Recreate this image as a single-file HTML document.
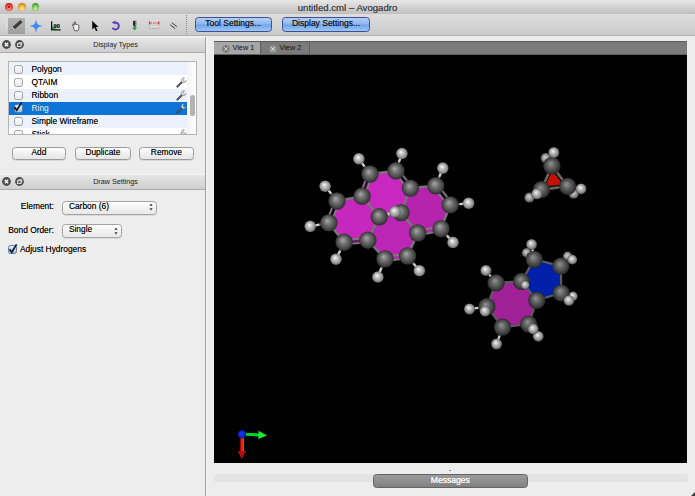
<!DOCTYPE html>
<html><head><meta charset="utf-8">
<style>
html,body{margin:0;padding:0;}
body{width:695px;height:496px;overflow:hidden;position:relative;background:#ededed;font-family:"Liberation Sans",sans-serif;font-size:8.4px;color:#000;text-shadow:0 0 0.3px rgba(0,0,0,0.55);}
.abs{position:absolute;}
#titlebar{left:0;top:0;width:695px;height:14.3px;background:linear-gradient(#e7e7e7,#d5d5d5 45%,#bfbfbf);}
#title{left:0px;width:695px;top:1.8px;text-align:center;font-size:9.6px;color:#404040;line-height:12px;}
.tl{width:7.8px;height:7.8px;border-radius:50%;top:3.2px;box-sizing:border-box;}
#toolbar{left:0;top:14.3px;width:695px;height:22.2px;background:linear-gradient(#dedede,#cacaca);box-sizing:border-box;border-bottom:1px solid #b2b2b2;}
.dockhead{left:0;width:205px;height:16.4px;background:linear-gradient(#e6e6e6,#cecece);border-bottom:1px solid #adadad;border-top:1px solid #f2f2f2;box-sizing:border-box;}
.docktitle{left:26px;width:179px;text-align:center;font-size:7.2px;line-height:14px;color:#1a1a1a;text-shadow:none;}
.dk{width:9px;height:9px;border-radius:50%;background:#4c4c4c;}
.btn{height:13.2px;border:1px solid #9c9c9c;border-radius:3.5px;background:linear-gradient(#ffffff,#f0f0f0 50%,#e6e6e6);box-sizing:border-box;text-align:center;line-height:9.6px;color:#000;box-shadow:0 0.5px 0.5px rgba(0,0,0,0.15);}
.bluebtn{height:14.3px;top:17.4px;border:1px solid #3d4f96;border-radius:3.5px;background:linear-gradient(#b4cff5,#8db5ee 48%,#6fa3e9 52%,#9cc6f7);box-sizing:border-box;text-align:center;font-size:8.5px;line-height:11.5px;color:#111;}
#list{left:8px;top:61.4px;width:189.2px;height:73.8px;background:#fff;border:1px solid #b4b4b4;box-sizing:border-box;overflow:hidden;}
.row{left:0;width:178px;height:13.1px;line-height:13px;}
.row span{position:absolute;left:22.5px;top:0.5px;}
.cb{position:absolute;left:4.5px;top:2.3px;width:9px;height:9px;border:1px solid #a2a2a2;border-radius:2.5px;background:linear-gradient(#fdfdfd,#e9e9e9);box-sizing:border-box;}
.cbx{background:linear-gradient(#dcebfb,#9cc4f0);border-color:#5e7aa8;}
.combo{height:14px;border:1px solid #a4a4a4;border-radius:3.5px;background:linear-gradient(#ffffff,#f2f2f2 50%,#e8e8e8);box-sizing:border-box;line-height:9px;color:#000;padding-left:5.6px;box-shadow:0 0.5px 0.5px rgba(0,0,0,0.15);}
.lbl{text-align:right;width:53.9px;left:0;}
#tabbar{left:214px;top:40.6px;width:473px;height:14.4px;background:#7b7b7b;border-top:1px solid #5a5a5a;border-bottom:1px solid #5e5e5e;box-sizing:border-box;}
.tab{text-shadow:none;top:41.6px;height:12.6px;font-size:7.3px;line-height:12.4px;color:#111;box-sizing:border-box;}
#gl{left:214px;top:55px;width:473px;height:408px;background:#000;}
</style></head><body>
<div id="titlebar" class="abs"></div>
<div id="title" class="abs">untitled.cml – Avogadro</div>
<div class="abs tl" style="left:5.2px;background:radial-gradient(circle at 50% 70%,#ff9c8c,#ec4a40 45%,#b02420 80%,#6e1410);"></div>
<div class="abs" style="left:7.8px;top:5.9px;width:2.6px;height:2.6px;border-radius:50%;background:#8a0808;"></div>
<div class="abs tl" style="left:18.4px;background:radial-gradient(circle at 50% 72%,#ffec9c,#f0b23c 45%,#b87a20 80%,#6e4a10);"></div>
<div class="abs tl" style="left:31.5px;background:radial-gradient(circle at 50% 72%,#c8f4a8,#7ec656 45%,#46902c 80%,#285a18);"></div>
<div id="toolbar" class="abs"></div>
<!-- toolbar handle -->
<div class="abs" style="left:5.5px;top:19px;width:1.6px;height:10px;background:repeating-linear-gradient(#f4f4f4 0 1.4px,transparent 1.4px 2.6px);"></div>
<div class="abs" style="left:8.3px;top:17.5px;width:16.4px;height:16.2px;background:linear-gradient(#b2b2b2,#a0a0a0);"></div>
<!--ICONS-->
<svg class="abs" style="left:8px;top:17px" width="18" height="18" viewBox="0 0 18 18"><line x1="5.6" y1="11.2" x2="13.4" y2="4.2" stroke="#2e2e2e" stroke-width="3" stroke-linecap="butt"/><line x1="6.2" y1="10.2" x2="13.0" y2="4.0" stroke="#5a5a5a" stroke-width="0.8"/><polygon points="3.6,13 4.6,10.2 6.8,12.3" fill="#e8e0d0"/><polygon points="3.6,13 4.2,11.6 5.0,12.6" fill="#222"/></svg>
<svg class="abs" style="left:30.2px;top:19.6px" width="12" height="12" viewBox="0 0 12 12"><path d="M6 0.4 Q6.4 5.6 11.6 6 Q6.4 6.4 6 11.6 Q5.6 6.4 0.4 6 Q5.6 5.6 6 0.4 Z" fill="#2a80ff" stroke="#2a80ff" stroke-width="0.35" stroke-linejoin="round"/><circle cx="6" cy="6" r="1.1" fill="#5aa2ff"/></svg>
<svg class="abs" style="left:50px;top:20px" width="12" height="12" viewBox="0 0 12 12"><polygon points="2,9.5 2,5.5 6.5,9.5" fill="#35b035"/><path d="M1.6 1.2 V9.8 H10.6" stroke="#111" stroke-width="1.2" fill="none"/><text x="3.6" y="7.6" font-family="Liberation Sans" font-size="5.6" font-weight="bold" fill="#111">90</text></svg>
<svg class="abs" style="left:70px;top:20px" width="12" height="12" viewBox="0 0 12 12"><path d="M3.2 6.2 L2.2 4.6 Q2.6 3.8 3.4 4.4 L4.2 5.4 V2 Q4.8 1.2 5.4 2 V4.4 Q6 3.8 6.6 4.4 Q7.2 4 7.8 4.8 Q8.6 4.6 8.8 5.6 V8.4 Q8.6 10.4 7.8 10.8 H4.8 Q3.6 9 3.2 6.2 Z" fill="#f4f0e4" stroke="#3a3a3a" stroke-width="0.8"/></svg>
<svg class="abs" style="left:91px;top:20px" width="10" height="12" viewBox="0 0 10 12"><path d="M1.2 0.7 V9.6 L3.4 7.6 L5.0 11.2 L6.5 10.5 L4.9 7.0 L7.6 6.9 Z" fill="#0a0a0a"/></svg>
<svg class="abs" style="left:109px;top:19px" width="13" height="13" viewBox="0 0 13 13"><path d="M6.2 3.6 A3.4 3.4 0 1 1 3.4 8.6" stroke="#5b3fb5" stroke-width="1.9" fill="none"/><polygon points="2.6,3.6 6.6,1.6 6.4,5.6" fill="#5b3fb5"/><circle cx="6.3" cy="6.9" r="0.8" fill="#b8b0d8"/></svg>
<svg class="abs" style="left:130px;top:20px" width="10" height="12" viewBox="0 0 10 12"><rect x="3" y="0.8" width="3.4" height="5" fill="#2a2a2a"/><rect x="5.2" y="1.6" width="1.4" height="1.2" fill="#ddd"/><rect x="5.2" y="3.6" width="1.4" height="1.2" fill="#ddd"/><rect x="3.6" y="6" width="2.2" height="2" fill="#2f9e3f"/><polygon points="2.2,7.6 7.2,7.6 4.7,10.6" fill="#2f9e3f"/></svg>
<svg class="abs" style="left:148px;top:20px" width="13" height="12" viewBox="0 0 13 12"><rect x="1" y="5.8" width="10.4" height="3.2" fill="#dedede" stroke="#b4b4b4" stroke-width="0.4"/><path d="M2.5 7.4 V9 M4.5 7.8 V9 M6.5 7.4 V9 M8.5 7.8 V9 M10 7.4 V9" stroke="#777" stroke-width="0.5"/><path d="M1.4 3 H11" stroke="#e03030" stroke-width="0.8" stroke-dasharray="2.6 1"/><path d="M1.6 1.4 V4.6 M10.8 1.4 V4.6" stroke="#e02020" stroke-width="1.1"/></svg>
<svg class="abs" style="left:167px;top:20px" width="12" height="12" viewBox="0 0 12 12"><path d="M3.2 4.8 L8.2 8.6 M4.8 2.8 L9.8 6.6" stroke="#2a2a2a" stroke-width="0.9"/></svg>
<!--/ICONS-->
<div class="abs" style="left:186px;top:15px;width:0;height:19px;border-left:1px dotted #8a8a8a;"></div>
<div class="abs bluebtn" style="left:195px;width:76.5px;">Tool Settings...</div>
<div class="abs bluebtn" style="left:282px;width:88px;">Display Settings...</div>

<div class="abs dockhead" style="top:37px;"></div>
<div class="abs docktitle" style="top:38px;">Display Types</div>
<div class="abs dockhead" style="top:174px;"></div>
<div class="abs docktitle" style="top:175px;">Draw Settings</div>
<!--DOCKICONS-->
<svg class="abs" style="left:2px;top:40px" width="9" height="9" viewBox="0 0 9 9"><circle cx="4.5" cy="4.5" r="4.4" fill="#4a4a4a"/><path d="M2.8 2.8 L6.2 6.2 M6.2 2.8 L2.8 6.2" stroke="#f4f4f4" stroke-width="1.5"/></svg>
<svg class="abs" style="left:15.1px;top:40px" width="9" height="9" viewBox="0 0 9 9"><circle cx="4.5" cy="4.5" r="4.4" fill="#4a4a4a"/><rect x="2.4" y="3.8" width="3.6" height="2.6" fill="none" stroke="#f4f4f4" stroke-width="0.9"/><path d="M3.8 3.6 V2.6 H6.8 V5 H6.2" fill="none" stroke="#f4f4f4" stroke-width="0.8"/></svg>
<svg class="abs" style="left:2px;top:177px" width="9" height="9" viewBox="0 0 9 9"><circle cx="4.5" cy="4.5" r="4.4" fill="#4a4a4a"/><path d="M2.8 2.8 L6.2 6.2 M6.2 2.8 L2.8 6.2" stroke="#f4f4f4" stroke-width="1.5"/></svg>
<svg class="abs" style="left:15.1px;top:177px" width="9" height="9" viewBox="0 0 9 9"><circle cx="4.5" cy="4.5" r="4.4" fill="#4a4a4a"/><rect x="2.4" y="3.8" width="3.6" height="2.6" fill="none" stroke="#f4f4f4" stroke-width="0.9"/><path d="M3.8 3.6 V2.6 H6.8 V5 H6.2" fill="none" stroke="#f4f4f4" stroke-width="0.8"/></svg>
<!--/DOCKICONS-->
<div id="list" class="abs">
 <div class="abs row" style="top:0;background:#ecf2fd;"><i class="cb"></i><span>Polygon</span></div>
 <div class="abs row" style="top:13.1px;"><i class="cb"></i><span>QTAIM</span></div>
 <div class="abs row" style="top:26.2px;background:#ecf2fd;"><i class="cb"></i><span>Ribbon</span></div>
 <div class="abs row" style="top:39.3px;background:#0b74d6;color:#fff;"><i class="cb cbx"></i><span>Ring</span></div>
 <div class="abs row" style="top:52.4px;background:#ecf2fd;"><i class="cb"></i><span>Simple Wireframe</span></div>
 <div class="abs row" style="top:65.5px;"><i class="cb"></i><span>Stick</span></div>
 <div class="abs" style="left:178px;top:0;width:10px;height:73px;background:linear-gradient(90deg,#f4f4f4,#fdfdfd);"></div>
 <div class="abs" style="left:180.7px;top:32.6px;width:5px;height:20.7px;border-radius:2.5px;background:#b2b2b2;"></div>
</div>
<!--WRENCH-->
<svg class="abs" style="left:175.6px;top:77.2px" width="11" height="11" viewBox="0 0 11 11"><path d="M1.4 9.6 L6.2 4.8" stroke="#3c3c3c" stroke-width="2" stroke-linecap="round"/><path d="M1.6 9.2 L6.0 4.8" stroke="#8a8a8a" stroke-width="0.6"/><path d="M6.4 1.2 Q4.6 2.4 5.4 4.4 Q6.4 6.2 8.6 5.6 Q10 5 10.2 3.6 L8.4 4.4 L7.2 3.6 L7.0 2.2 L8.6 1.0 Q7.4 0.6 6.4 1.2 Z" fill="#e4e4e4" stroke="#6a6a6a" stroke-width="0.5"/></svg>
<svg class="abs" style="left:175.6px;top:90.3px" width="11" height="11" viewBox="0 0 11 11"><path d="M1.4 9.6 L6.2 4.8" stroke="#3c3c3c" stroke-width="2" stroke-linecap="round"/><path d="M1.6 9.2 L6.0 4.8" stroke="#8a8a8a" stroke-width="0.6"/><path d="M6.4 1.2 Q4.6 2.4 5.4 4.4 Q6.4 6.2 8.6 5.6 Q10 5 10.2 3.6 L8.4 4.4 L7.2 3.6 L7.0 2.2 L8.6 1.0 Q7.4 0.6 6.4 1.2 Z" fill="#e4e4e4" stroke="#6a6a6a" stroke-width="0.5"/></svg>
<svg class="abs" style="left:175.6px;top:103.4px" width="11" height="11" viewBox="0 0 11 11"><path d="M1.4 9.6 L6.2 4.8" stroke="#3c3c3c" stroke-width="2" stroke-linecap="round"/><path d="M1.6 9.2 L6.0 4.8" stroke="#8a8a8a" stroke-width="0.6"/><path d="M6.4 1.2 Q4.6 2.4 5.4 4.4 Q6.4 6.2 8.6 5.6 Q10 5 10.2 3.6 L8.4 4.4 L7.2 3.6 L7.0 2.2 L8.6 1.0 Q7.4 0.6 6.4 1.2 Z" fill="#e4e4e4" stroke="#6a6a6a" stroke-width="0.5"/></svg>
<div class="abs" style="left:175.6px;top:129.4px;width:11px;height:5px;overflow:hidden;"><svg style="position:absolute;left:0;top:0" width="11" height="11" viewBox="0 0 11 11"><path d="M1.4 9.6 L6.2 4.8" stroke="#3c3c3c" stroke-width="2" stroke-linecap="round"/><path d="M1.6 9.2 L6.0 4.8" stroke="#8a8a8a" stroke-width="0.6"/><path d="M6.4 1.2 Q4.6 2.4 5.4 4.4 Q6.4 6.2 8.6 5.6 Q10 5 10.2 3.6 L8.4 4.4 L7.2 3.6 L7.0 2.2 L8.6 1.0 Q7.4 0.6 6.4 1.2 Z" fill="#e4e4e4" stroke="#6a6a6a" stroke-width="0.5"/></svg></div>
<!--/WRENCH-->
<div class="abs btn" style="left:12px;top:147.3px;width:53.7px;">Add</div>
<div class="abs btn" style="left:75px;top:147.3px;width:55.7px;">Duplicate</div>
<div class="abs btn" style="left:139.2px;top:147.3px;width:54.5px;">Remove</div>
<div class="abs lbl" style="top:200.7px;">Element:</div>
<div class="abs combo" style="left:62.3px;top:200.7px;width:94.8px;">Carbon (6)</div>
<div class="abs lbl" style="top:224.5px;">Bond Order:</div>
<div class="abs combo" style="left:62.3px;top:224.2px;width:59.5px;">Single</div>
<div class="abs" style="left:20px;top:244px;">Adjust Hydrogens</div>
<div class="abs cb cbx" style="left:8.2px;top:245.2px;"></div>
<!--MISC-->
<svg class="abs" style="left:11.6px;top:101px" width="12" height="12" viewBox="0 0 12 12"><path d="M2.6 6.4 L4.8 9.2 L9.6 1.4" stroke="#151515" stroke-width="1.7" fill="none" stroke-linejoin="miter"/></svg>
<svg class="abs" style="left:7px;top:242.6px" width="12" height="12" viewBox="0 0 12 12"><path d="M2.6 6.4 L4.8 9.2 L9.6 1.4" stroke="#151515" stroke-width="1.7" fill="none" stroke-linejoin="miter"/></svg>
<svg class="abs" style="left:148.4px;top:202.4px" width="6" height="10" viewBox="0 0 6 10"><polygon points="3,1.6 4.6,3.8 1.4,3.8" fill="#3a3a3a"/><polygon points="1.4,6.3 4.6,6.3 3,8.5" fill="#3a3a3a"/></svg>
<svg class="abs" style="left:112.7px;top:225.9px" width="6" height="10" viewBox="0 0 6 10"><polygon points="3,1.6 4.6,3.8 1.4,3.8" fill="#3a3a3a"/><polygon points="1.4,6.3 4.6,6.3 3,8.5" fill="#3a3a3a"/></svg>
<!--/MISC-->
<div class="abs" style="left:205px;top:37px;width:1px;height:459px;background:#a2a2a2;"></div>
<div class="abs" style="left:206px;top:37px;width:1.6px;height:459px;background:#f1f1f1;"></div>
<div id="tabbar" class="abs"></div>
<div class="abs tab" style="left:214px;width:47px;background:#a6a6a6;border-right:1px solid #5c5c5c;padding-left:18.5px;">View 1</div>
<div class="abs tab" style="left:261px;width:49px;background:#7b7b7b;border-right:1px solid #5c5c5c;padding-left:18.5px;">View 2</div>
<!--TABICONS-->
<svg class="abs" style="left:221.5px;top:44.5px" width="8" height="8" viewBox="0 0 8 8"><circle cx="4" cy="4" r="3.7" fill="#7c7c7c"/><path d="M2.2 2.2 L5.8 5.8 M5.8 2.2 L2.2 5.8" stroke="#f0f0f0" stroke-width="0.7"/></svg>
<svg class="abs" style="left:269.2px;top:44.5px" width="8" height="8" viewBox="0 0 8 8"><circle cx="4" cy="4" r="3.7" fill="#959595"/><path d="M2.2 2.2 L5.8 5.8 M5.8 2.2 L2.2 5.8" stroke="#f0f0f0" stroke-width="0.7"/></svg>
<!--/TABICONS-->
<div id="gl" class="abs"></div>
<!--MOL--><svg class="abs" style="left:0;top:0" width="695" height="496" viewBox="0 0 695 496">
<defs>
<radialGradient id="gc" cx="0.5" cy="0.5" r="0.53" fx="0.41" fy="0.36">
<stop offset="0" stop-color="#aaaaaa"/><stop offset="0.16" stop-color="#929292"/><stop offset="0.42" stop-color="#6e6e6e"/><stop offset="0.72" stop-color="#4c4c4c"/><stop offset="0.92" stop-color="#303030"/><stop offset="1" stop-color="#141414"/></radialGradient>
<radialGradient id="gh" cx="0.5" cy="0.5" r="0.53" fx="0.41" fy="0.36">
<stop offset="0" stop-color="#fafafa"/><stop offset="0.16" stop-color="#e4e4e4"/><stop offset="0.42" stop-color="#bcbcbc"/><stop offset="0.72" stop-color="#969696"/><stop offset="0.92" stop-color="#6c6c6c"/><stop offset="1" stop-color="#3a3a3a"/></radialGradient>
<radialGradient id="ghd" cx="0.5" cy="0.5" r="0.52" fx="0.42" fy="0.38">
<stop offset="0" stop-color="#d0d0d0"/><stop offset="0.5" stop-color="#a0a0a0"/><stop offset="1" stop-color="#484848"/></radialGradient>
<radialGradient id="ghm" cx="0.5" cy="0.5" r="0.53" fx="0.41" fy="0.36">
<stop offset="0" stop-color="#f6f6f6"/><stop offset="0.18" stop-color="#dcdcdc"/><stop offset="0.45" stop-color="#b2b2b2"/><stop offset="0.75" stop-color="#888888"/><stop offset="1" stop-color="#3c3c3c"/></radialGradient>
<radialGradient id="gcd" cx="0.5" cy="0.5" r="0.53" fx="0.42" fy="0.37">
<stop offset="0" stop-color="#949494"/><stop offset="0.18" stop-color="#7e7e7e"/><stop offset="0.45" stop-color="#5e5e5e"/><stop offset="0.75" stop-color="#404040"/><stop offset="0.93" stop-color="#282828"/><stop offset="1" stop-color="#101010"/></radialGradient>
<radialGradient id="gb" cx="0.45" cy="0.42" r="0.6">
<stop offset="0" stop-color="#1a3cff"/><stop offset="1" stop-color="#0018a0"/></radialGradient>
<clipPath id="glclip"><rect x="214" y="55" width="473" height="408"/></clipPath>
</defs>
<g clip-path="url(#glclip)">
<polygon points="370.0,174.0 396.0,170.8 410.4,188.1 401.1,212.6 379.2,216.8 362.0,196.2" fill="#c828c0"/>
<polygon points="362.0,196.2 337.0,201.0 328.8,222.9 344.1,242.2 367.8,240.2 379.2,216.8" fill="#c628be"/>
<polygon points="410.4,188.1 435.8,185.8 450.2,204.9 441.0,228.7 417.7,233.0 401.1,212.6" fill="#b624ae"/>
<polygon points="379.2,216.8 401.1,212.6 417.7,233.0 407.6,256.0 385.0,258.9 367.8,240.2" fill="#bc26b4"/>
<line x1="370.0" y1="174.0" x2="364.4" y2="166.4" stroke="#717171" stroke-width="2.4"/>
<line x1="364.4" y1="166.4" x2="358.9" y2="158.8" stroke="#d0d0d0" stroke-width="2.4"/>
<line x1="396.0" y1="170.8" x2="398.9" y2="162.2" stroke="#717171" stroke-width="2.4"/>
<line x1="398.9" y1="162.2" x2="401.9" y2="153.5" stroke="#d0d0d0" stroke-width="2.4"/>
<line x1="435.8" y1="185.8" x2="439.3" y2="176.9" stroke="#717171" stroke-width="2.4"/>
<line x1="439.3" y1="176.9" x2="442.8" y2="168.1" stroke="#d0d0d0" stroke-width="2.4"/>
<line x1="450.2" y1="204.9" x2="459.4" y2="204.1" stroke="#717171" stroke-width="2.4"/>
<line x1="459.4" y1="204.1" x2="468.6" y2="203.2" stroke="#d0d0d0" stroke-width="2.4"/>
<line x1="441.0" y1="228.7" x2="447.0" y2="235.6" stroke="#717171" stroke-width="2.4"/>
<line x1="447.0" y1="235.6" x2="453.0" y2="242.4" stroke="#d0d0d0" stroke-width="2.4"/>
<line x1="337.0" y1="201.0" x2="331.1" y2="193.6" stroke="#717171" stroke-width="2.4"/>
<line x1="331.1" y1="193.6" x2="325.1" y2="186.2" stroke="#d0d0d0" stroke-width="2.4"/>
<line x1="328.8" y1="222.9" x2="319.5" y2="224.6" stroke="#717171" stroke-width="2.4"/>
<line x1="319.5" y1="224.6" x2="310.2" y2="226.3" stroke="#d0d0d0" stroke-width="2.4"/>
<line x1="344.1" y1="242.2" x2="340.1" y2="250.7" stroke="#717171" stroke-width="2.4"/>
<line x1="340.1" y1="250.7" x2="336.0" y2="259.2" stroke="#d0d0d0" stroke-width="2.4"/>
<line x1="385.0" y1="258.9" x2="381.4" y2="267.9" stroke="#717171" stroke-width="2.4"/>
<line x1="381.4" y1="267.9" x2="377.9" y2="277.0" stroke="#d0d0d0" stroke-width="2.4"/>
<line x1="407.6" y1="256.0" x2="413.5" y2="263.4" stroke="#717171" stroke-width="2.4"/>
<line x1="413.5" y1="263.4" x2="419.4" y2="270.7" stroke="#d0d0d0" stroke-width="2.4"/>
<line x1="370.0" y1="174.0" x2="396.0" y2="170.8" stroke="#767676" stroke-width="2.5"/>
<line x1="410.4" y1="188.1" x2="435.8" y2="185.8" stroke="#767676" stroke-width="2.5"/>
<line x1="450.2" y1="204.9" x2="441.0" y2="228.7" stroke="#767676" stroke-width="2.5"/>
<line x1="417.7" y1="233.0" x2="401.1" y2="212.6" stroke="#767676" stroke-width="2.5"/>
<line x1="401.1" y1="212.6" x2="379.2" y2="216.8" stroke="#767676" stroke-width="2.5"/>
<line x1="379.2" y1="216.8" x2="362.0" y2="196.2" stroke="#767676" stroke-width="2.5"/>
<line x1="362.0" y1="196.2" x2="337.0" y2="201.0" stroke="#767676" stroke-width="2.5"/>
<line x1="328.8" y1="222.9" x2="344.1" y2="242.2" stroke="#767676" stroke-width="2.5"/>
<line x1="367.8" y1="240.2" x2="379.2" y2="216.8" stroke="#767676" stroke-width="2.5"/>
<line x1="410.4" y1="188.1" x2="401.1" y2="212.6" stroke="#767676" stroke-width="2.5"/>
<line x1="417.7" y1="233.0" x2="407.6" y2="256.0" stroke="#767676" stroke-width="2.5"/>
<line x1="367.8" y1="240.2" x2="385.0" y2="258.9" stroke="#767676" stroke-width="2.5"/>
<line x1="370.0" y1="174.0" x2="362.0" y2="196.2" stroke="#3a0a38" stroke-width="3.1"/>
<line x1="367.9" y1="173.3" x2="359.9" y2="195.5" stroke="#7c7c7c" stroke-width="1.9"/>
<line x1="372.1" y1="174.7" x2="364.1" y2="196.9" stroke="#7c7c7c" stroke-width="1.9"/>
<line x1="396.0" y1="170.8" x2="410.4" y2="188.1" stroke="#14001a" stroke-width="3.1"/>
<line x1="394.3" y1="172.2" x2="408.7" y2="189.5" stroke="#7c7c7c" stroke-width="1.9"/>
<line x1="397.7" y1="169.4" x2="412.1" y2="186.7" stroke="#7c7c7c" stroke-width="1.9"/>
<line x1="435.8" y1="185.8" x2="450.2" y2="204.9" stroke="#14001a" stroke-width="3.1"/>
<line x1="434.0" y1="187.1" x2="448.4" y2="206.2" stroke="#7c7c7c" stroke-width="1.9"/>
<line x1="437.6" y1="184.5" x2="452.0" y2="203.6" stroke="#7c7c7c" stroke-width="1.9"/>
<line x1="441.0" y1="228.7" x2="417.7" y2="233.0" stroke="#b428ac" stroke-width="3.1"/>
<line x1="440.6" y1="226.5" x2="417.3" y2="230.8" stroke="#7c7c7c" stroke-width="1.9"/>
<line x1="441.4" y1="230.9" x2="418.1" y2="235.2" stroke="#7c7c7c" stroke-width="1.9"/>
<line x1="337.0" y1="201.0" x2="328.8" y2="222.9" stroke="#14001a" stroke-width="3.1"/>
<line x1="334.9" y1="200.2" x2="326.7" y2="222.1" stroke="#7c7c7c" stroke-width="1.9"/>
<line x1="339.1" y1="201.8" x2="330.9" y2="223.7" stroke="#7c7c7c" stroke-width="1.9"/>
<line x1="344.1" y1="242.2" x2="367.8" y2="240.2" stroke="#6a1a66" stroke-width="3.1"/>
<line x1="344.3" y1="244.4" x2="368.0" y2="242.4" stroke="#7c7c7c" stroke-width="1.9"/>
<line x1="343.9" y1="240.0" x2="367.6" y2="238.0" stroke="#7c7c7c" stroke-width="1.9"/>
<line x1="385.0" y1="258.9" x2="407.6" y2="256.0" stroke="#b428ac" stroke-width="3.1"/>
<line x1="385.3" y1="261.1" x2="407.9" y2="258.2" stroke="#7c7c7c" stroke-width="1.9"/>
<line x1="384.7" y1="256.7" x2="407.3" y2="253.8" stroke="#7c7c7c" stroke-width="1.9"/>
<circle cx="358.9" cy="158.8" r="5.8" fill="url(#gh)"/>
<circle cx="401.9" cy="153.5" r="5.8" fill="url(#gh)"/>
<circle cx="442.8" cy="168.1" r="5.8" fill="url(#gh)"/>
<circle cx="468.6" cy="203.2" r="5.8" fill="url(#gh)"/>
<circle cx="453.0" cy="242.4" r="5.8" fill="url(#gh)"/>
<circle cx="325.1" cy="186.2" r="5.8" fill="url(#gh)"/>
<circle cx="310.2" cy="226.3" r="5.8" fill="url(#gh)"/>
<circle cx="336.0" cy="259.2" r="5.8" fill="url(#gh)"/>
<circle cx="377.9" cy="277.0" r="5.8" fill="url(#gh)"/>
<circle cx="419.4" cy="270.7" r="5.8" fill="url(#gh)"/>
<circle cx="370.0" cy="174.0" r="8.7" fill="url(#gc)"/>
<circle cx="396.0" cy="170.8" r="8.7" fill="url(#gc)"/>
<circle cx="410.4" cy="188.1" r="8.7" fill="url(#gc)"/>
<circle cx="435.8" cy="185.8" r="8.7" fill="url(#gc)"/>
<circle cx="450.2" cy="204.9" r="8.7" fill="url(#gc)"/>
<circle cx="441.0" cy="228.7" r="8.7" fill="url(#gc)"/>
<circle cx="417.7" cy="233.0" r="8.7" fill="url(#gc)"/>
<circle cx="401.1" cy="212.6" r="8.7" fill="url(#gc)"/>
<circle cx="362.0" cy="196.2" r="8.7" fill="url(#gc)"/>
<circle cx="337.0" cy="201.0" r="8.7" fill="url(#gc)"/>
<circle cx="328.8" cy="222.9" r="8.7" fill="url(#gc)"/>
<circle cx="344.1" cy="242.2" r="8.7" fill="url(#gc)"/>
<circle cx="367.8" cy="240.2" r="8.7" fill="url(#gc)"/>
<circle cx="385.0" cy="258.9" r="8.7" fill="url(#gc)"/>
<circle cx="407.6" cy="256.0" r="8.7" fill="url(#gc)"/>
<line x1="379.2" y1="216.8" x2="387.0" y2="214.3" stroke="#717171" stroke-width="2.6"/>
<line x1="387.0" y1="214.3" x2="394.9" y2="211.8" stroke="#d0d0d0" stroke-width="2.6"/>
<circle cx="379.2" cy="216.8" r="8.7" fill="url(#gc)"/>
<circle cx="394.9" cy="211.8" r="5.8" fill="url(#gh)"/>
<circle cx="545.7" cy="158.1" r="5.0" fill="url(#ghd)"/>
<circle cx="529.4" cy="197.6" r="5.0" fill="url(#ghd)"/>
<circle cx="573.8" cy="193.8" r="5.0" fill="url(#ghd)"/>
<line x1="551.9" y1="165.7" x2="541.5" y2="189.6" stroke="#666666" stroke-width="2.6"/>
<line x1="541.5" y1="189.6" x2="567.6" y2="186.3" stroke="#666666" stroke-width="2.6"/>
<line x1="551.9" y1="165.7" x2="567.6" y2="186.3" stroke="#666666" stroke-width="2.6"/>
<polygon points="552.0,170.5 545.0,186.6 563.0,184.5" fill="#c41200"/>
<circle cx="541.5" cy="189.6" r="8.6" fill="url(#gcd)"/>
<circle cx="567.6" cy="186.3" r="8.6" fill="url(#gcd)"/>
<circle cx="551.9" cy="165.7" r="8.8" fill="url(#gcd)"/>
<circle cx="553.8" cy="152.5" r="5.5" fill="url(#ghm)"/>
<circle cx="536.9" cy="193.8" r="5.5" fill="url(#ghm)"/>
<circle cx="581.1" cy="188.8" r="5.4" fill="url(#ghm)"/>
<circle cx="526.6" cy="252.8" r="4.7" fill="url(#ghd)"/>
<circle cx="567.6" cy="256.2" r="4.6" fill="url(#ghd)"/>
<polygon points="534.2,259.3 560.9,266.1 561.2,293.0 536.8,300.3 521.6,281.4" fill="#0020aa"/>
<polygon points="496.0,282.8 521.6,281.4 536.8,300.3 528.6,324.0 502.5,327.2 486.9,306.6" fill="#a02098"/>
<line x1="534.2" y1="259.3" x2="560.9" y2="266.1" stroke="#5c5c5c" stroke-width="2.2"/>
<line x1="560.9" y1="266.1" x2="561.2" y2="293.0" stroke="#5c5c5c" stroke-width="2.2"/>
<line x1="561.2" y1="293.0" x2="536.8" y2="300.3" stroke="#5c5c5c" stroke-width="2.2"/>
<line x1="536.8" y1="300.3" x2="521.6" y2="281.4" stroke="#5c5c5c" stroke-width="2.2"/>
<line x1="521.6" y1="281.4" x2="534.2" y2="259.3" stroke="#5c5c5c" stroke-width="2.2"/>
<line x1="521.6" y1="281.4" x2="496.0" y2="282.8" stroke="#5c5c5c" stroke-width="2.2"/>
<line x1="496.0" y1="282.8" x2="486.9" y2="306.6" stroke="#5c5c5c" stroke-width="2.2"/>
<line x1="486.9" y1="306.6" x2="502.5" y2="327.2" stroke="#5c5c5c" stroke-width="2.2"/>
<line x1="502.5" y1="327.2" x2="528.6" y2="324.0" stroke="#5c5c5c" stroke-width="2.2"/>
<line x1="528.6" y1="324.0" x2="536.8" y2="300.3" stroke="#5c5c5c" stroke-width="2.2"/>
<line x1="496.0" y1="282.8" x2="490.9" y2="276.6" stroke="#717171" stroke-width="2.2"/>
<line x1="490.9" y1="276.6" x2="485.9" y2="270.4" stroke="#d0d0d0" stroke-width="2.2"/>
<line x1="486.9" y1="306.6" x2="478.2" y2="307.8" stroke="#717171" stroke-width="2.2"/>
<line x1="478.2" y1="307.8" x2="469.5" y2="309.0" stroke="#d0d0d0" stroke-width="2.2"/>
<line x1="502.5" y1="327.2" x2="499.6" y2="335.6" stroke="#717171" stroke-width="2.2"/>
<line x1="499.6" y1="335.6" x2="496.6" y2="344.0" stroke="#d0d0d0" stroke-width="2.2"/>
<line x1="528.6" y1="324.0" x2="533.5" y2="330.1" stroke="#717171" stroke-width="2.2"/>
<line x1="533.5" y1="330.1" x2="538.3" y2="336.3" stroke="#d0d0d0" stroke-width="2.2"/>
<line x1="534.2" y1="259.3" x2="532.9" y2="251.9" stroke="#717171" stroke-width="2.2"/>
<line x1="532.9" y1="251.9" x2="531.6" y2="244.4" stroke="#d0d0d0" stroke-width="2.2"/>
<circle cx="485.9" cy="270.4" r="5.5" fill="url(#ghm)"/>
<circle cx="469.5" cy="309.0" r="5.5" fill="url(#ghm)"/>
<circle cx="496.6" cy="344.0" r="5.5" fill="url(#ghm)"/>
<circle cx="538.3" cy="336.3" r="5.4" fill="url(#ghm)"/>
<circle cx="573.0" cy="296.2" r="4.7" fill="url(#ghm)"/>
<circle cx="534.2" cy="259.3" r="8.6" fill="url(#gcd)"/>
<circle cx="560.9" cy="266.1" r="8.6" fill="url(#gcd)"/>
<circle cx="561.2" cy="293.0" r="8.6" fill="url(#gcd)"/>
<circle cx="536.8" cy="300.3" r="8.6" fill="url(#gcd)"/>
<circle cx="521.6" cy="281.4" r="8.6" fill="url(#gcd)"/>
<circle cx="496.0" cy="282.8" r="8.6" fill="url(#gcd)"/>
<circle cx="486.9" cy="306.6" r="8.6" fill="url(#gcd)"/>
<circle cx="502.5" cy="327.2" r="8.6" fill="url(#gcd)"/>
<circle cx="528.6" cy="324.0" r="8.6" fill="url(#gcd)"/>
<circle cx="531.6" cy="244.4" r="5.4" fill="url(#ghm)"/>
<circle cx="572.3" cy="259.6" r="4.9" fill="url(#ghm)"/>
<circle cx="568.9" cy="300.5" r="5.3" fill="url(#ghm)"/>
<circle cx="525.2" cy="285.0" r="4.3" fill="url(#ghm)"/>
<circle cx="485.1" cy="311.2" r="5.4" fill="url(#ghm)"/>
<circle cx="533.2" cy="329.0" r="5.4" fill="url(#ghm)"/>
<line x1="245" y1="434.2" x2="260" y2="435.0" stroke="#00d424" stroke-width="3"/>
<polygon points="258.6,430.8 267,435.6 258.2,439" fill="#12ee30"/>
<rect x="240.4" y="437" width="3.5" height="14.5" fill="#f01408"/><rect x="242.6" y="437" width="1.3" height="14.5" fill="#ff3a14"/>
<polygon points="237.8,451 245.9,451 241.6,459.2" fill="#b40c06"/>
<circle cx="242.1" cy="434.4" r="4.2" fill="url(#gb)"/>
</g></svg><!--/MOL-->
<div class="abs" style="left:214px;top:473.8px;width:472.6px;height:7.6px;background:#e3e3e3;border-radius:1.5px;box-shadow:0.5px 0.5px 0 #d6d6d6;"></div>
<div class="abs" style="left:691px;top:492px;width:0;height:0;border-left:4px solid transparent;border-bottom:4px solid #3a3a3a;"></div>
<div class="abs" style="left:448.5px;top:469.5px;width:2.5px;height:1px;background:#8a8a8a;"></div>
<div class="abs" style="left:373px;top:474px;width:154.7px;height:13.8px;background:linear-gradient(#9c9c9c,#808080);border:1px solid #636363;border-radius:3.5px;box-sizing:border-box;color:#fff;text-align:center;font-size:8.6px;line-height:11px;text-shadow:0 0 0.5px #fff;">Messages</div>
</body></html>
